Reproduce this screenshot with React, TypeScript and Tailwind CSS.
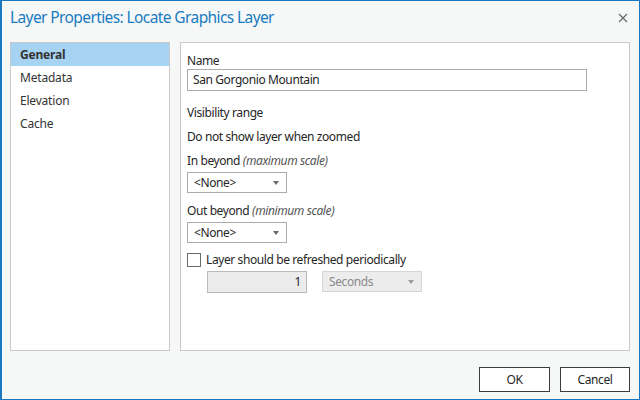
const font = { fontFamily: '"Noto Sans", "Open Sans", sans-serif' };

function Select({ value, disabled }: { value: string; disabled?: boolean }) {
  return (
    <div
      className={
        "flex h-[21px] w-[100px] items-center justify-between border pl-[6px] pr-[7px] " +
        (disabled ? "border-[#d6d6d6] bg-[#ececec] text-[#8a8a8a]" : "border-[#ababab] bg-white text-[#262626]")
      }
    >
      <span>{value}</span>
      <svg width="6" height="4" viewBox="0 0 6 4">
        <path d="M0 0h6L3 4z" fill={disabled ? "#9a9a9a" : "#6a6a6a"} />
      </svg>
    </div>
  );
}

export default function App() {
  const items = ["General", "Metadata", "Elevation", "Cache"];
  return (
    <div
      className="flex h-[400px] w-[640px] flex-col border border-l-2 border-[#1878c2] bg-[#f6f8f8] text-[12px] tracking-[-0.4px] text-[#262626]"
      style={font}
    >
      <div className="flex h-[41px] shrink-0 items-start justify-between pl-[8px] pr-[11px] pt-[9px]">
        <h1 className="text-[15.5px] leading-none tracking-[-0.6px] text-[#1a7bc0]">
          Layer Properties: Locate Graphics Layer
        </h1>
        <svg width="10" height="10" viewBox="0 0 10 10" className="mt-[3px]">
          <path d="M1 1l8 8M9 1l-8 8" stroke="#6b6b6b" strokeWidth="1.3" />
        </svg>
      </div>

      <div className="flex h-[309px] shrink-0 gap-[10px] pl-[8px] pr-[9px]">
        <div className="w-[160px] border border-[#c9c9c9] bg-white tracking-[-0.2px]">
          {items.map((it, i) => (
            <div
              key={it}
              className={
                "flex h-[23px] items-center pl-[9px] " +
                (i === 0 ? "bg-[#a6d3f1] font-bold text-[#333]" : "text-[#333]")
              }
            >
              {it}
            </div>
          ))}
        </div>

        <div className="flex-1 border border-[#c9c9c9] bg-white pl-[6px] pt-[10px]">
          <div className="leading-[16px]">Name</div>
          <div className="mt-0 flex h-[22px] w-[400px] items-center border border-[#ababab] pl-[5px]">
            San Gorgonio Mountain
          </div>

          <div className="mt-[14px] leading-[16px]">Visibility range</div>
          <div className="mt-[8px] leading-[16px]">Do not show layer when zoomed</div>

          <div className="mt-[8px] leading-[16px]">
            In beyond <i className="text-[#555]">(maximum scale)</i>
          </div>
          <div className="mt-[3px]">
            <Select value="<None>" />
          </div>

          <div className="mt-[10px] leading-[16px]">
            Out beyond <i className="text-[#555]">(minimum scale)</i>
          </div>
          <div className="mt-[3px]">
            <Select value="<None>" />
          </div>

          <div className="mt-[9px] flex items-center gap-[5px]">
            <div className="h-[14px] w-[14px] border border-[#6b6b6b] bg-white" />
            <span className="leading-[16px]">Layer should be refreshed periodically</span>
          </div>
          <div className="ml-[20px] mt-[3px] flex gap-[15px]">
            <div className="flex h-[22px] w-[100px] items-center justify-end border border-[#b9b9b9] bg-[#ececec] pr-[5px] text-[#262626]">
              1
            </div>
            <Select value="Seconds" disabled />
          </div>
        </div>
      </div>

      <div className="flex flex-1 items-start justify-end gap-[10px] pr-[9px] pt-[16px]">
        <button className="h-[25px] w-[71px] border border-[#3c3c3c] bg-white text-[#262626]">OK</button>
        <button className="h-[25px] w-[70px] border border-[#3c3c3c] bg-white text-[#262626]">Cancel</button>
      </div>
    </div>
  );
}
